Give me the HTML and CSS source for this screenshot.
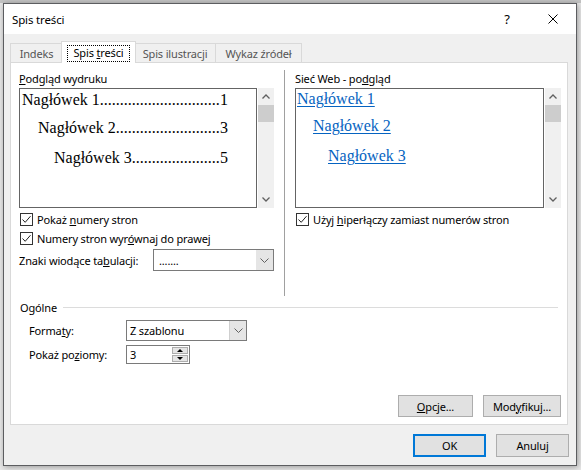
FILE: index.html
```html
<!DOCTYPE html>
<html lang="pl">
<head>
<meta charset="utf-8">
<title>Spis treści</title>
<link rel="stylesheet" href="styles.css">
</head>
<body>
<div class="topstrip"></div>
<div class="dialog">
  <div class="titlebar">
    <span class="title">Spis treści</span>
    <span class="tb-btn help">?</span>
    <span class="tb-btn close"><svg width="10" height="10" viewBox="0 0 10 10"><path d="M0.5 0.5 L9.5 9.5 M9.5 0.5 L0.5 9.5" stroke="#000" stroke-width="1" fill="none"/></svg></span>
  </div>
  <div class="client">
    <div class="tabs">
      <div class="tab t1">Indeks</div>
      <div class="tab active t2"><span class="focus">Spis <u>t</u>reści</span></div>
      <div class="tab t3">Spis ilustracji</div>
      <div class="tab t4">Wykaz źródeł</div>
    </div>
    <div class="panel">
      <div class="columns">
        <div class="col col-left">
          <div class="label"><u>P</u>odgląd wydruku</div>
          <div class="preview">
            <div class="pbox">
              <div class="toc-row r1"><span>Nagłówek 1</span><span class="lead">..............................</span><span>1</span></div>
              <div class="toc-row r2"><span>Nagłówek 2</span><span class="lead">..........................</span><span>3</span></div>
              <div class="toc-row r3"><span>Nagłówek 3</span><span class="lead">......................</span><span>5</span></div>
            </div>
            <div class="sbar">
              <div class="sarrow"><svg width="8" height="5" viewBox="0 0 8 5"><path d="M0.5 4.5 L4 1 L7.5 4.5" stroke="#606060" stroke-width="1.3" fill="none"/></svg></div>
              <div class="thumb"></div>
              <div class="strack"></div>
              <div class="sarrow"><svg width="8" height="5" viewBox="0 0 8 5"><path d="M0.5 0.5 L4 4 L7.5 0.5" stroke="#606060" stroke-width="1.3" fill="none"/></svg></div>
            </div>
          </div>
          <div class="check c1"><span class="cb"><svg width="11" height="11" viewBox="0 0 11 11"><path d="M1.5 5.5 L4.2 8.3 L9.5 2.2" stroke="#222" stroke-width="1" fill="none"/></svg></span><span>Pokaż <u>n</u>umery stron</span></div>
          <div class="check c2"><span class="cb"><svg width="11" height="11" viewBox="0 0 11 11"><path d="M1.5 5.5 L4.2 8.3 L9.5 2.2" stroke="#222" stroke-width="1" fill="none"/></svg></span><span>Numery stron wyr<u>ó</u>wnaj do prawej</span></div>
          <div class="leader-row">
            <span>Znaki wiodące ta<u>b</u>ulacji:</span>
            <div class="combo combo-leader">
              <span class="val">.......</span>
              <span class="arr"><svg width="9" height="5" viewBox="0 0 9 5"><path d="M0.5 0.5 L4.5 4.5 L8.5 0.5" stroke="#606060" stroke-width="1" fill="none"/></svg></span>
            </div>
          </div>
        </div>
        <div class="vsep"></div>
        <div class="col col-right">
          <div class="label">Sieć Web - po<u>d</u>gląd</div>
          <div class="preview">
            <div class="pbox wide">
              <div class="web-row w1"><span class="link">Nagłówek 1</span></div>
              <div class="web-row w2"><span class="link">Nagłówek 2</span></div>
              <div class="web-row w3"><span class="link">Nagłówek 3</span></div>
            </div>
            <div class="sbar">
              <div class="sarrow"><svg width="8" height="5" viewBox="0 0 8 5"><path d="M0.5 4.5 L4 1 L7.5 4.5" stroke="#606060" stroke-width="1.3" fill="none"/></svg></div>
              <div class="thumb"></div>
              <div class="strack"></div>
              <div class="sarrow"><svg width="8" height="5" viewBox="0 0 8 5"><path d="M0.5 0.5 L4 4 L7.5 0.5" stroke="#606060" stroke-width="1.3" fill="none"/></svg></div>
            </div>
          </div>
          <div class="check c1"><span class="cb"><svg width="11" height="11" viewBox="0 0 11 11"><path d="M1.5 5.5 L4.2 8.3 L9.5 2.2" stroke="#222" stroke-width="1" fill="none"/></svg></span><span>Użyj <u>h</u>iperłączy zamiast numerów stron</span></div>
        </div>
      </div>
      <div class="group-head"><span>Ogólne</span><span class="line"></span></div>
      <div class="frow fr1">
        <span class="flabel">Forma<u>t</u>y:</span>
        <div class="combo combo-format">
          <span class="val">Z szablonu</span>
          <span class="arr"><svg width="9" height="5" viewBox="0 0 9 5"><path d="M0.5 0.5 L4.5 4.5 L8.5 0.5" stroke="#606060" stroke-width="1" fill="none"/></svg></span>
        </div>
      </div>
      <div class="frow fr2">
        <span class="flabel">Pokaż po<u>z</u>iomy:</span>
        <div class="spinner">
          <span class="val">3</span>
          <span class="spin"><span class="sbtn"><span class="tri-up"></span></span><span class="sbtn"><span class="tri-down"></span></span></span>
        </div>
      </div>
      <div class="pbtns">
        <div class="btn b-opcje"><span><u>O</u>pcje...</span></div>
        <div class="btn b-mod"><span>Mod<u>y</u>fikuj...</span></div>
      </div>
    </div>
    <div class="dbtns">
      <div class="btn b-ok">OK</div>
      <div class="btn b-cancel">Anuluj</div>
    </div>
  </div>
</div>
</body>
</html>
```
FILE: styles.css
```css
* { box-sizing: border-box; }
html, body { margin: 0; padding: 0; }
body {
  width: 581px;
  height: 470px;
  overflow: hidden;
  background: #e8e8e8;
  font-family: "Noto Sans", "Open Sans", sans-serif;
  font-size: 11px;
  letter-spacing: -0.15px;
  color: #000;
}
u { text-decoration: underline; text-underline-offset: 1px; }

.topstrip { height: 3px; background: #c4c4c4; }

.dialog {
  margin-left: 3px;
  width: 574px;
  height: 463px;
  border: 1px solid #5c5d60;
  background: #f0f0f0;
  box-shadow: 1px 1px 6px rgba(0, 0, 0, 0.35);
  display: flex;
  flex-direction: column;
}

.titlebar {
  height: 30px;
  flex: none;
  background: #fff;
  display: flex;
  align-items: center;
}
.title { flex: 1; padding-left: 8px; font-size: 11.5px; }
.tb-btn {
  width: 46px;
  height: 30px;
  display: flex;
  align-items: center;
  justify-content: center;
}
.help { font-size: 13px; }

.client {
  flex: 1;
  display: flex;
  flex-direction: column;
  padding: 7px 8px 0 6px;
}

.tabs { display: flex; align-items: flex-end; height: 21px; flex: none; }
.tab {
  height: 19px;
  border: 1px solid #d9d9d9;
  border-bottom: none;
  background: #f0f0f0;
  color: #555;
  display: flex;
  align-items: center;
  justify-content: center;
}
.t1 { width: 53px; }
.t2 { width: 75px; }
.t3 { width: 82px; }
.t4 { width: 87px; margin-left: -1px; }
.tab.active {
  height: 22px;
  margin: 0 -2px -1px -2px;
  background: #fff;
  color: #000;
  align-items: flex-start;
  padding-top: 3px;
  position: relative;
  z-index: 2;
}
.focus {
  display: inline-block;
  border: 1px dotted #000;
  height: 17px;
  line-height: 14px;
  padding: 0 5px;
}

.panel {
  height: 363px;
  flex: none;
  background: #fff;
  border: 1px solid #d9d9d9;
  padding: 7px 6px 7px 8px;
  display: flex;
  flex-direction: column;
}

.columns { display: flex; height: 226px; flex: none; }
.col-left { width: 255px; }
.col-right { width: 266px; }
.vsep { width: 1px; background: #a0a0a0; margin: 0 10px; }

.label { height: 18px; line-height: 18px; }

.preview { display: flex; height: 120px; }
.pbox {
  width: 238px;
  height: 120px;
  border: 1px solid #646464;
  overflow: hidden;
  font-family: "Liberation Serif", "Times New Roman", serif;
  font-size: 16px;
  letter-spacing: 0;
  display: flex;
  flex-direction: column;
}
.pbox.wide { width: 249px; }

.sbar {
  width: 16px;
  margin-left: 1px;
  background: #f0f0f0;
  display: flex;
  flex-direction: column;
}
.sarrow { height: 17px; display: flex; align-items: center; justify-content: center; }
.thumb { height: 17px; background: #cdcdcd; }
.strack { flex: 1; }

.toc-row {
  display: flex;
  align-items: baseline;
  justify-content: space-between;
  width: 208px;
  height: 18px;
  line-height: 18px;
  white-space: nowrap;
}
.toc-row .lead { flex: 1; }
.r1 { margin-top: 2px; padding-left: 2px; }
.r2 { margin-top: 10px; padding-left: 18px; }
.r3 { margin-top: 12px; padding-left: 34px; }

.web-row { height: 18px; line-height: 18px; white-space: nowrap; }
.link { color: #0563c1; text-decoration: underline; text-underline-offset: 2px; }
.w1 { margin-top: 1px; padding-left: 1px; }
.w2 { margin-top: 9px; padding-left: 17px; }
.w3 { margin-top: 12px; padding-left: 32px; }

.check { display: flex; align-items: center; height: 16px; }
.c1 { margin-top: 3px; }
.c2 { margin-top: 3px; }
.cb {
  width: 13px;
  height: 13px;
  border: 1px solid #333;
  background: #fff;
  margin-left: 1px;
  margin-right: 4px;
  display: flex;
  align-items: center;
  justify-content: center;
}
.cb svg { display: block; }

.leader-row { display: flex; align-items: center; height: 22px; margin-top: 3px; }
.combo {
  display: flex;
  border: 1px solid #7a7a7a;
  background: #fff;
}
.combo-leader { margin-left: auto; width: 121px; height: 22px; }
.combo .val { flex: 1; display: flex; align-items: center; padding-left: 5px; }
.combo .arr {
  width: 17px;
  background: #e5e5e5;
  display: flex;
  align-items: center;
  justify-content: center;
}
.combo-format { width: 121px; height: 21px; }
.combo-format .val { padding-left: 3px; }
.combo-format .arr { border-left: 1px solid #cfcfcf; }

.group-head { display: flex; align-items: center; height: 16px; margin-top: 3px; padding-left: 1px; }
.group-head .line { flex: 1; height: 1px; background: #dcdcdc; margin: 0 3px 0 6px; }

.frow { display: flex; align-items: center; padding-left: 10px; }
.fr1 { margin-top: 5px; }
.fr2 { margin-top: 4px; }
.flabel { width: 97px; }

.spinner {
  display: flex;
  width: 64px;
  height: 19px;
  border: 1px solid #7a7a7a;
  background: #fff;
}
.spinner .val { flex: 1; display: flex; align-items: center; padding-left: 3px; }
.spin {
  width: 17px;
  display: flex;
  flex-direction: column;
  gap: 1px;
  padding: 1px 1px 1px 0;
}
.sbtn {
  flex: 1;
  border: 1px solid #adadad;
  background: #e5e5e5;
  display: flex;
  align-items: center;
  justify-content: center;
}
.tri-up { width: 0; height: 0; border-left: 3px solid transparent; border-right: 3px solid transparent; border-bottom: 3px solid #000; }
.tri-down { width: 0; height: 0; border-left: 3px solid transparent; border-right: 3px solid transparent; border-top: 3px solid #000; }

.btn {
  height: 22px;
  background: #e1e1e1;
  border: 1px solid #adadad;
  display: flex;
  align-items: center;
  justify-content: center;
}
.pbtns { margin-top: auto; display: flex; justify-content: flex-end; gap: 10px; }
.b-opcje { width: 75px; }
.b-mod { width: 78px; }

.dbtns { display: flex; justify-content: flex-end; gap: 10px; margin-top: 9px; margin-right: -1px; }
.dbtns .btn { width: 73px; height: 23px; }
.b-ok { border: 2px solid #0078d7; }
```
